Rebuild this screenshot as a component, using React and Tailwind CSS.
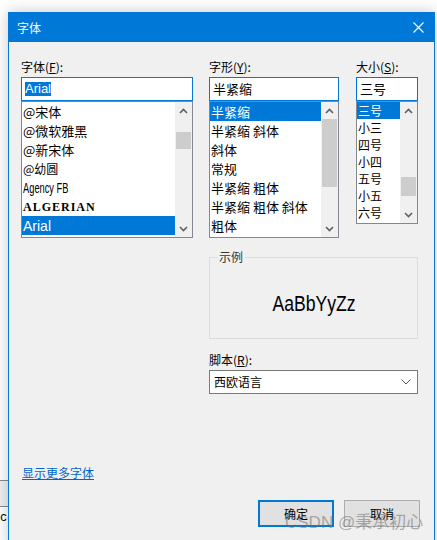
import React from 'react';

const cjk = "font-['Microsoft_YaHei_UI','Noto_Sans_CJK_SC',sans-serif]";

const Up = () => (
  <svg width="9" height="6" viewBox="0 0 9 6" fill="none">
    <path d="M1 5L4.5 1.5L8 5" stroke="#606060" strokeWidth="1.6" />
  </svg>
);

const Down = () => (
  <svg width="9" height="6" viewBox="0 0 9 6" fill="none">
    <path d="M1 1L4.5 4.5L8 1" stroke="#606060" strokeWidth="1.6" />
  </svg>
);

// vertical scrollbar, thumb given as top offset + height inside the track
const ScrollBar = ({ thumbTop, thumbH }) => (
  <div className="flex flex-col w-[17px] h-full bg-[#f0f0f0]">
    <div className="h-[17px] flex items-center justify-center">
      <Up />
    </div>
    <div className="flex-1 relative">
      <div
        className="absolute left-[1px] right-[1px] bg-[#cdcdcd]"
        style={{ top: thumbTop, height: thumbH }}
      />
    </div>
    <div className="h-[17px] flex items-center justify-center">
      <Down />
    </div>
  </div>
);

const Label = ({ text, hot }) => (
  <div className="h-[16px] leading-[16px] text-[12px] text-black mb-[2px]">
    {text}(<u>{hot}</u>):
  </div>
);

const ListBox = ({ height, children, thumbTop, thumbH }) => (
  <div
    className="flex border border-[#828790] bg-white"
    style={{ height }}
  >
    <div className="flex-1 overflow-hidden">{children}</div>
    <ScrollBar thumbTop={thumbTop} thumbH={thumbH} />
  </div>
);

const Item = ({ children, selected, h = 'h-[19px]', className = '' }) => (
  <div
    className={`${h} leading-[16px] flex items-center pl-[1px] whitespace-nowrap overflow-hidden ${
      selected ? 'bg-[#0078d7] text-white' : 'text-black'
    } ${className}`}
  >
    {children}
  </div>
);

export default function App() {
  return (
    <div className={`relative w-[437px] h-[540px] overflow-hidden bg-white ${cjk}`}>
      {/* bits of the window behind */}
      <div className="absolute left-0 top-[480px] w-[20px] h-[27px] border-y border-[#8a8a8a] bg-[#f0f0f0]" />
      <div className="absolute left-0 top-[510px] text-[12px] leading-[16px] text-black font-['Liberation_Mono',monospace]">
        ce
      </div>

      {/* dialog window */}
      <div className="absolute left-[8px] top-[12px] w-[427px] h-[540px] border border-[#0078d7] bg-[#f0f0f0] shadow-[0_0_14px_rgba(0,0,0,0.22)]">
        <div className="h-[29px] bg-[#0078d7] flex items-center justify-between pl-[8px] pr-[10px]">
          <span className="text-white text-[12px] leading-[16px]">字体</span>
          <svg width="11" height="11" viewBox="0 0 11 11">
            <path d="M0.5 0.5L10.5 10.5M10.5 0.5L0.5 10.5" stroke="white" strokeWidth="1.1" />
          </svg>
        </div>

        <div className="pl-[12px] pt-[17px]">
          <div className="flex">
            {/* font */}
            <div className="w-[172px]">
              <Label text="字体" hot="F" />
              <div className="h-[24px] border border-[#0078d7] bg-white flex items-center pl-[3px]">
                <span className="bg-[#0078d7] text-white text-[13px] leading-[14px] font-['Liberation_Sans',Arial,sans-serif]">
                  Arial
                </span>
              </div>
              <ListBox height={137} thumbTop={13} thumbH={17}>
                <Item className="text-[13px]">@宋体</Item>
                <Item className="text-[13px]">@微软雅黑</Item>
                <Item className="text-[13px]">@新宋体</Item>
                <Item className="text-[12px] text-[#444]">@幼圆</Item>
                <Item className="text-[15px] font-['Liberation_Sans',sans-serif]">
                  <span className="inline-block scale-x-[0.62] origin-left">Agency FB</span>
                </Item>
                <Item className="text-[12px] font-bold tracking-[1px] font-['Liberation_Serif',serif]">
                  ALGERIAN
                </Item>
                <Item selected className="text-[14px] font-['Liberation_Sans',Arial,sans-serif]">
                  Arial
                </Item>
              </ListBox>
            </div>

            {/* style */}
            <div className="w-[130px] ml-[16px]">
              <Label text="字形" hot="Y" />
              <div className="h-[24px] border border-[#0078d7] bg-white flex items-center pl-[3px] text-[13px]">
                半紧缩
              </div>
              <ListBox height={137} thumbTop={0} thumbH={68}>
                <div className="text-[13px]">
                  <Item selected>半紧缩</Item>
                  <Item>半紧缩 斜体</Item>
                  <Item>斜体</Item>
                  <Item>常规</Item>
                  <Item>半紧缩 粗体</Item>
                  <Item>半紧缩 粗体 斜体</Item>
                  <Item>粗体</Item>
                </div>
              </ListBox>
            </div>

            {/* size */}
            <div className="w-[62px] ml-[17px]">
              <Label text="大小" hot="S" />
              <div className="h-[24px] border border-[#0078d7] bg-white flex items-center pl-[3px] text-[13px]">
                三号
              </div>
              <ListBox height={123} thumbTop={58} thumbH={19}>
                <div className="text-[12px]">
                  <Item selected h="h-[17px]">三号</Item>
                  <Item h="h-[17px]">小三</Item>
                  <Item h="h-[17px]">四号</Item>
                  <Item h="h-[17px]">小四</Item>
                  <Item h="h-[17px]">五号</Item>
                  <Item h="h-[17px]">小五</Item>
                  <Item h="h-[17px]">六号</Item>
                </div>
              </ListBox>
            </div>
          </div>

          <div className="flex">
            <div className="w-[188px]" />
            <div className="w-[209px]">
              <div className="relative mt-[19px] h-[82px] border border-[#dcdcdc] flex items-center justify-center pt-[11px]">
                <span className="absolute left-[7px] top-[-9px] px-[2px] bg-[#f0f0f0] text-[12px] leading-[16px] text-[#333]">
                  示例
                </span>
                <span className="inline-block text-[22px] leading-[24px] scale-x-[0.8] font-['Liberation_Sans',Arial,sans-serif] text-black">
                  AaBbYyZz
                </span>
              </div>
              <div className="mt-[13px]">
                <Label text="脚本" hot="R" />
              </div>
              <div className="mt-[2px] h-[24px] border border-[#7a7a7a] bg-white flex items-center justify-between pl-[4px] pr-[6px] text-[12px]">
                <span>西欧语言</span>
                <svg width="10" height="6" viewBox="0 0 10 6" fill="none">
                  <path d="M0.5 0.5L5 5L9.5 0.5" stroke="#555" strokeWidth="1" />
                </svg>
              </div>
            </div>
          </div>

          <div className="mt-[71px] pl-[1px] h-[16px] leading-[16px] text-[12px]">
            <span className="text-[#0066cc] underline">显示更多字体</span>
          </div>

          <div className="mt-[19px] flex justify-end gap-[10px] pr-[14px]">
            <div className="w-[76px] h-[27px] border-2 border-[#0078d7] bg-[#e1e1e1] flex items-center justify-center text-[12px] text-black">
              确定
            </div>
            <div className="w-[76px] h-[27px] border border-[#adadad] bg-[#e1e1e1] flex items-center justify-center text-[12px] text-black">
              取消
            </div>
          </div>
        </div>
      </div>

      {/* watermark */}
      <div className="absolute left-[285px] top-[510px] text-[17px] leading-[22px] text-[rgba(110,110,110,0.55)] whitespace-nowrap">
        <span className="font-['Liberation_Sans',sans-serif]">CSDN @</span>秉承初心
      </div>
    </div>
  );
}
